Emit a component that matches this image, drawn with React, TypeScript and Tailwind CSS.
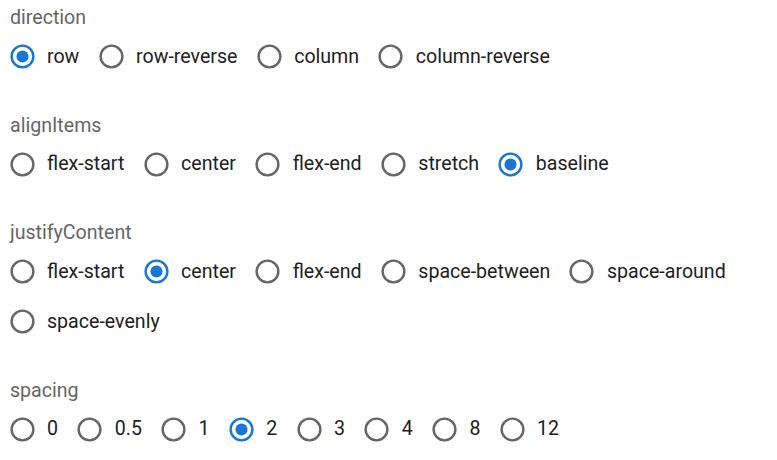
import React from 'react';

type Group = { label: string; options: string[]; value: string };

const groups: Group[] = [
  { label: 'direction', options: ['row', 'row-reverse', 'column', 'column-reverse'], value: 'row' },
  { label: 'alignItems', options: ['flex-start', 'center', 'flex-end', 'stretch', 'baseline'], value: 'baseline' },
  {
    label: 'justifyContent',
    options: ['flex-start', 'center', 'flex-end', 'space-between', 'space-around', 'space-evenly'],
    value: 'center',
  },
  { label: 'spacing', options: ['0', '0.5', '1', '2', '3', '4', '8', '12'], value: '2' },
];

const RadioIcon: React.FC<{ checked: boolean }> = ({ checked }) => (
  <svg viewBox="0 0 24 24" className={checked ? 'w-[29px] h-[29px] text-[#1976d2]' : 'w-[29px] h-[29px] text-[#666666]'}>
    <circle cx="12" cy="12" r="9" fill="none" stroke="currentColor" strokeWidth="2" />
    {checked && <circle cx="12" cy="12" r="5" fill="currentColor" />}
  </svg>
);

const App: React.FC = () => {
  return (
    <div className="min-h-[460px] bg-white pl-[10px] pt-[5px] font-['Roboto',sans-serif]">
      {groups.map((g) => (
        <div key={g.label} className="mb-[31px]">
          <div className="text-[19.6px] leading-[26px] text-[#666666]">{g.label}</div>
          <div className="mt-[0.5px] flex flex-wrap">
            {g.options.map((opt) => (
              <label key={opt} className="flex items-center ml-[-13px] mr-[19.7px] cursor-pointer">
                <span className="flex w-[50px] h-[50px] items-center justify-center">
                  <RadioIcon checked={opt === g.value} />
                </span>
                <span className="text-[19.6px] leading-[1.5] text-[#212121]">{opt}</span>
              </label>
            ))}
          </div>
        </div>
      ))}
    </div>
  );
};

export default App;
